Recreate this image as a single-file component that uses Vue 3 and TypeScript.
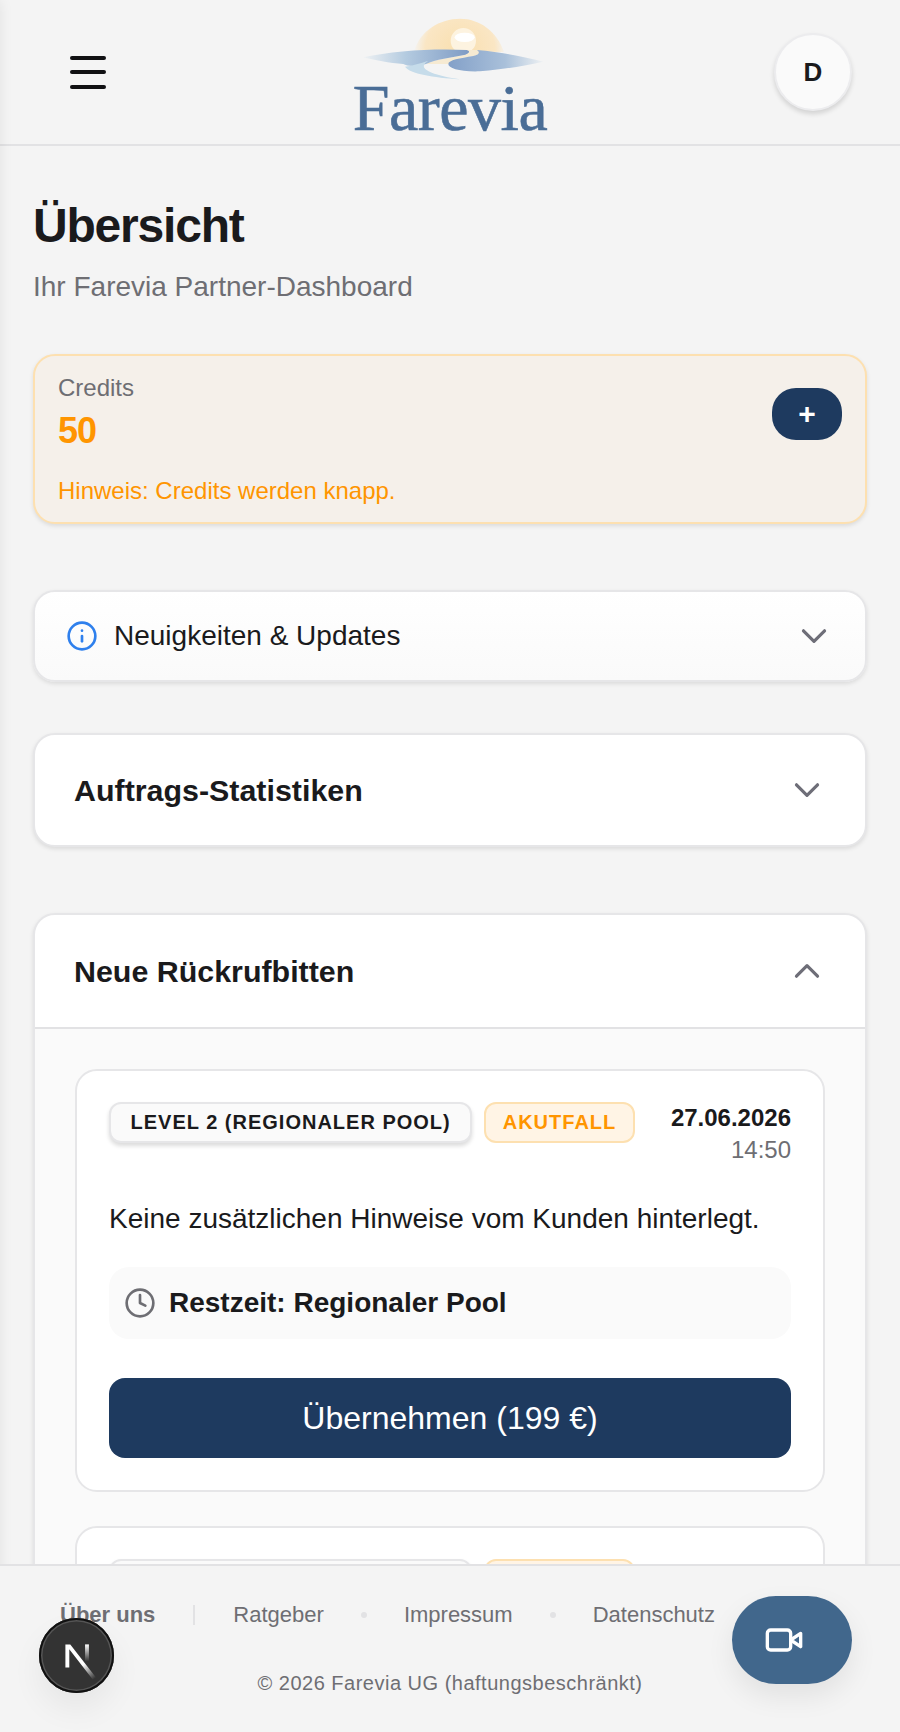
<script setup lang="ts">
interface Callback {
  level: string
  date: string
  time: string
  note: string
  remaining: string
  price: string
}

const footerLinks = ['Ratgeber', 'Impressum', 'Datenschutz']

const callbacks: Callback[] = [
  {
    level: 'Level 2 (Regionaler Pool)',
    date: '27.06.2026',
    time: '14:50',
    note: 'Keine zusätzlichen Hinweise vom Kunden hinterlegt.',
    remaining: 'Restzeit: Regionaler Pool',
    price: 'Übernehmen (199 €)'
  },
  {
    level: 'Level 2 (Regionaler Pool)',
    date: '27.06.2026',
    time: '14:50',
    note: 'Keine zusätzlichen Hinweise vom Kunden hinterlegt.',
    remaining: 'Restzeit: Regionaler Pool',
    price: 'Übernehmen (199 €)'
  }
]
</script>

<template>
  <div class="app">
    <div class="drawer-shadow"></div>

    <header class="topbar">
      <button class="menu-btn" aria-label="Menü">
        <span></span>
        <span></span>
        <span></span>
      </button>
      <div class="logo">
        <svg class="logo-mark" viewBox="0 0 780 240" width="260" height="80">
          <defs>
            <radialGradient id="halo" cx="420" cy="150" r="140" gradientUnits="userSpaceOnUse">
              <stop offset="0" stop-color="#f9dfae" />
              <stop offset="0.75" stop-color="#fae6c4" />
              <stop offset="1" stop-color="#f4f4f4" />
            </radialGradient>
            <linearGradient id="waterLeft" x1="0" y1="0" x2="1" y2="0">
              <stop offset="0" stop-color="#eef1f3" />
              <stop offset="0.4" stop-color="#b4cbe0" />
              <stop offset="1" stop-color="#7f9bc4" />
            </linearGradient>
            <linearGradient id="waterRight" x1="0" y1="0" x2="1" y2="0">
              <stop offset="0" stop-color="#83a0c8" />
              <stop offset="0.6" stop-color="#a9c0da" />
              <stop offset="1" stop-color="#eef1f3" />
            </linearGradient>
            <filter id="soft" x="-5%" y="-5%" width="110%" height="110%">
              <feGaussianBlur stdDeviation="2" />
            </filter>
          </defs>
          <g filter="url(#soft)">
            <path d="M283 152C300 92 360 56 420 56C480 56 532 96 552 156Z" fill="url(#halo)" />
            <circle cx="430" cy="122" r="38" fill="#fdf3e0" />
            <ellipse cx="434" cy="112" rx="30" ry="14" fill="#ffffff" />
            <path d="M436 150L472 150C484 156 480 164 460 168C425 174 395 180 385 192L318 192C345 178 395 172 436 164C448 160 450 154 436 150Z" fill="#f6ead2" />
            <path d="M130 172C220 152 340 145 440 150C452 153 448 160 436 164C395 172 345 178 318 192C292 200 262 200 250 192C210 190 160 180 130 172Z" fill="url(#waterLeft)" />
            <path d="M255 200C280 196 300 190 325 182C295 200 310 220 420 238C340 232 270 222 255 200Z" fill="#c6dcea" />
            <path d="M470 150C540 155 610 170 670 185C620 195 560 208 480 214C420 216 385 205 385 192C385 180 420 175 460 168C480 163 480 155 470 150Z" fill="url(#waterRight)" />
          </g>
        </svg>
        <span class="logo-word">Farevia</span>
      </div>
      <div class="avatar-wrap">
        <div class="avatar">D</div>
      </div>
    </header>

    <main class="content">
      <h1 class="title">Übersicht</h1>
      <p class="subtitle">Ihr Farevia Partner-Dashboard</p>

      <section class="credits">
        <div class="credits-row">
          <div>
            <div class="credits-label">Credits</div>
            <div class="credits-value">50</div>
          </div>
          <button class="credits-add">+</button>
        </div>
        <div class="credits-hint">Hinweis: Credits werden knapp.</div>
      </section>

      <section class="news">
        <svg class="news-icon" viewBox="0 0 24 24" fill="none" stroke="#2f80ed" stroke-width="2" stroke-linecap="round" stroke-linejoin="round">
          <circle cx="12" cy="12" r="10" />
          <path d="M12 16v-4" />
          <path d="M12 8h.01" />
        </svg>
        <span class="news-text">Neuigkeiten &amp; Updates</span>
        <svg class="chevron" viewBox="0 0 24 24" fill="none" stroke="#6e6e78" stroke-width="2.4" stroke-linecap="round" stroke-linejoin="round">
          <path d="m4.1 8.1 7.9 7.9 7.9-7.9" />
        </svg>
      </section>

      <section class="panel stats">
        <h2 class="panel-title">Auftrags-Statistiken</h2>
        <svg class="chevron" viewBox="0 0 24 24" fill="none" stroke="#6e6e78" stroke-width="2.4" stroke-linecap="round" stroke-linejoin="round">
          <path d="m4.1 8.1 7.9 7.9 7.9-7.9" />
        </svg>
      </section>

      <section class="panel callbacks">
        <div class="callbacks-head">
          <h2 class="panel-title">Neue Rückrufbitten</h2>
          <svg class="chevron" viewBox="0 0 24 24" fill="none" stroke="#6e6e78" stroke-width="2.4" stroke-linecap="round" stroke-linejoin="round">
            <path d="m4.1 15.9 7.9-7.9 7.9 7.9" />
          </svg>
        </div>
        <div class="callbacks-body">
          <article v-for="(item, i) in callbacks" :key="i" class="request">
            <div class="request-top">
              <span class="badge badge-level">{{ item.level }}</span>
              <span class="badge badge-acute">Akutfall</span>
              <div class="request-when">
                <div class="request-date">{{ item.date }}</div>
                <div class="request-time">{{ item.time }}</div>
              </div>
            </div>
            <p class="request-note">{{ item.note }}</p>
            <div class="request-remaining">
              <svg class="clock" viewBox="0 0 24 24" fill="none" stroke="#6e6e73" stroke-width="2" stroke-linecap="round" stroke-linejoin="round">
                <circle cx="12" cy="12" r="10" />
                <path d="M12 6v6l4 2" />
              </svg>
              <span>{{ item.remaining }}</span>
            </div>
            <button class="request-btn">{{ item.price }}</button>
          </article>
        </div>
      </section>
    </main>

    <footer class="footer">
      <nav class="footer-links">
        <a class="footer-active">Über uns</a>
        <span class="footer-divider"></span>
        <template v-for="(link, i) in footerLinks" :key="link">
          <span v-if="i > 0" class="footer-dot"></span>
          <a>{{ link }}</a>
        </template>
      </nav>
      <div class="copyright">© 2026 Farevia UG (haftungsbeschränkt)</div>
    </footer>

    <button class="next-badge" aria-label="Next.js">
      <svg viewBox="0 0 180 180" width="58" height="58">
        <defs>
          <linearGradient id="nDiag" x1="109" y1="116.5" x2="144.5" y2="160.5" gradientUnits="userSpaceOnUse">
            <stop offset="0" stop-color="#fff" />
            <stop offset="1" stop-color="#fff" stop-opacity="0" />
          </linearGradient>
          <linearGradient id="nBar" x1="121" y1="54" x2="120.8" y2="106.9" gradientUnits="userSpaceOnUse">
            <stop offset="0" stop-color="#fff" />
            <stop offset="1" stop-color="#fff" stop-opacity="0" />
          </linearGradient>
        </defs>
        <path d="M149.508 157.52L69.142 54H54V125.97H66.114V69.384L139.999 164.845C143.333 162.614 146.509 160.165 149.508 157.52Z" fill="url(#nDiag)" />
        <rect x="115" y="54" width="12" height="72" fill="url(#nBar)" />
      </svg>
    </button>

    <button class="video-btn" aria-label="Video">
      <svg viewBox="0 0 24 24" width="40" height="40" fill="none" stroke="#fff" stroke-width="2" stroke-linecap="round" stroke-linejoin="round">
        <path d="m22 8-6 4 6 4V8Z" />
        <rect x="2" y="6" width="14" height="12" rx="2" ry="2" />
      </svg>
    </button>
  </div>
</template>

<style>
html,
body {
  margin: 0;
  background: #f4f4f4;
}
</style>

<style scoped>
.app {
  position: relative;
  display: flex;
  flex-direction: column;
  width: 900px;
  height: 1732px;
  overflow: hidden;
  background: #f4f4f4;
  color: #1a1a1c;
  font-family: "Liberation Sans", Arial, sans-serif;
}

.drawer-shadow {
  position: absolute;
  top: 0;
  bottom: 0;
  left: -20px;
  width: 20px;
  box-shadow: 0 0 14px rgb(0 0 0 / 0.08);
}

button {
  border: none;
  font-family: inherit;
  cursor: pointer;
}

.topbar {
  flex: none;
  display: grid;
  grid-template-columns: 1fr auto 1fr;
  align-items: center;
  height: 144px;
  padding: 0 48px;
  border-bottom: 2px solid #e2e2e4;
}

.menu-btn {
  display: flex;
  flex-direction: column;
  justify-content: space-between;
  width: 36px;
  height: 33px;
  padding: 0;
  margin-left: 22px;
  background: none;
}

.menu-btn span {
  display: block;
  height: 4px;
  border-radius: 2px;
  background: #111113;
}

.logo {
  display: flex;
  flex-direction: column;
  align-items: center;
  width: 260px;
  height: 144px;
}

.logo-mark {
  display: block;
  flex: none;
}

.logo-word {
  margin-top: -1px;
  font-family: "Liberation Serif", "Times New Roman", serif;
  font-size: 66px;
  line-height: 57px;
  letter-spacing: -0.5px;
  color: #4a6d96;
  -webkit-text-stroke: 0.6px #4a6d96;
}

.avatar-wrap {
  display: flex;
  justify-content: flex-end;
}

.avatar {
  display: flex;
  align-items: center;
  justify-content: center;
  width: 74px;
  height: 74px;
  border: 2px solid #ececee;
  border-radius: 50%;
  background: #fafafa;
  box-shadow: 0 3px 5px rgb(0 0 0 / 0.14);
  font-size: 26px;
  font-weight: 700;
  color: #1a1a1c;
}

.content {
  flex: 1;
  min-height: 0;
  overflow: hidden;
  padding: 0 33px;
}

.title {
  margin: 51px 0 0;
  font-size: 48px;
  line-height: 58px;
  font-weight: 700;
  letter-spacing: -1.2px;
}

.subtitle {
  margin: 14px 0 0;
  font-size: 28px;
  line-height: 36px;
  color: #6e6e73;
}

.credits {
  margin-top: 49px;
  height: 170px;
  box-sizing: border-box;
  padding: 19px 23px 0;
  border: 2px solid #fde0b0;
  border-radius: 22px;
  background: #f5f0ea;
  box-shadow: 0 2px 4px rgb(0 0 0 / 0.1);
}

.credits-row {
  display: flex;
  align-items: center;
  justify-content: space-between;
}

.credits-label {
  font-size: 24px;
  line-height: 26px;
  color: #6e6e73;
}

.credits-value {
  margin-top: 10px;
  font-size: 36px;
  line-height: 40px;
  font-weight: 700;
  letter-spacing: -1px;
  color: #ff9500;
}

.credits-add {
  width: 70px;
  height: 52px;
  margin-top: 2px;
  border-radius: 24px;
  background: #1e3a5f;
  color: #fff;
  font-size: 30px;
  font-weight: 700;
  line-height: 52px;
  padding: 0;
}

.credits-hint {
  margin-top: 26px;
  font-size: 24px;
  line-height: 28px;
  color: #ff9500;
}

.news {
  display: flex;
  align-items: center;
  height: 92px;
  box-sizing: border-box;
  margin-top: 66px;
  padding: 0 35px 0 31px;
  border: 2px solid #e6e6e8;
  border-radius: 22px;
  background: linear-gradient(#ffffff, #fafafa);
  box-shadow: 0 2px 4px rgb(0 0 0 / 0.1);
}

.news-icon {
  flex: none;
  width: 32px;
  height: 32px;
  margin-right: 16px;
}

.news-text {
  flex: 1;
  font-size: 28px;
  color: #1a1a1c;
}

.chevron {
  flex: none;
  width: 32px;
  height: 32px;
}

.panel {
  border: 2px solid #e6e6e8;
  border-radius: 22px;
  background: #fff;
  box-shadow: 0 2px 4px rgb(0 0 0 / 0.1);
}

.panel-title {
  margin: 0;
  flex: 1;
  font-size: 30.4px;
  font-weight: 700;
  color: #1a1a1c;
}

.stats {
  display: flex;
  align-items: center;
  box-sizing: border-box;
  height: 114px;
  margin-top: 51px;
  padding: 0 42px 0 39px;
}

.callbacks {
  margin-top: 66px;
  overflow: hidden;
}

.callbacks-head {
  display: flex;
  align-items: center;
  box-sizing: border-box;
  height: 114px;
  padding: 0 42px 0 39px;
  border-bottom: 2px solid #e2e2e4;
}

.callbacks-body {
  display: flex;
  flex-direction: column;
  gap: 34px;
  padding: 40px 40px;
  background: #fafafa;
}

.request {
  padding: 31px 32px 32px;
  border: 2px solid #e6e6e8;
  border-radius: 22px;
  background: #fff;
}

.request-top {
  display: flex;
  align-items: flex-start;
  gap: 12px;
}

.badge {
  box-sizing: border-box;
  height: 41px;
  padding: 0 19.5px;
  border: 2px solid;
  border-radius: 12px;
  font-size: 20px;
  line-height: 37px;
  font-weight: 700;
  letter-spacing: 1px;
  text-transform: uppercase;
  white-space: nowrap;
}

.badge-level {
  border-color: #e6e6e8;
  background: #fafafa;
  color: #1a1a1c;
  box-shadow: 0 3px 4px rgb(0 0 0 / 0.14);
}

.badge-acute {
  padding: 0 16.5px;
  border-color: #fde0b0;
  background: #fff4e5;
  color: #ff9500;
}

.request-when {
  margin-left: auto;
  text-align: right;
}

.request-date {
  font-size: 24px;
  line-height: 32px;
  font-weight: 700;
}

.request-time {
  font-size: 24px;
  line-height: 32px;
  color: #6e6e73;
}

.request-note {
  margin: 35px 0 0;
  font-size: 28px;
  line-height: 36px;
  color: #1a1a1c;
}

.request-remaining {
  display: flex;
  align-items: center;
  gap: 13px;
  height: 72px;
  margin-top: 30px;
  padding: 0 15px;
  border-radius: 20px;
  background: #fafafa;
  font-size: 28px;
  font-weight: 700;
}

.clock {
  flex: none;
  width: 32px;
  height: 32px;
}

.request-btn {
  display: block;
  width: 100%;
  height: 80px;
  margin-top: 39px;
  border-radius: 16px;
  background: #1e3a5f;
  color: #fff;
  font-size: 32px;
}

.footer {
  flex: none;
  position: relative;
  height: 168px;
  box-sizing: border-box;
  padding: 35px 0 0 60px;
  border-top: 2px solid #e2e2e4;
  background: #f4f4f4;
  color: #6e6e73;
}

.footer-links {
  display: flex;
  align-items: center;
  gap: 39px;
  font-size: 22px;
  line-height: 28px;
}

.footer-active {
  font-weight: 700;
}

.footer-divider {
  width: 2px;
  height: 20px;
  margin: 0 -1px;
  background: #e2e2e4;
}

.footer-dot {
  width: 6px;
  height: 6px;
  margin: 0 -2px;
  border-radius: 50%;
  background: #e2e2e4;
}

.copyright {
  margin: 41px 0 0 -60px;
  text-align: center;
  font-size: 20px;
  line-height: 26px;
  letter-spacing: 0.5px;
}

.next-badge {
  position: absolute;
  left: 39px;
  top: 1618px;
  display: flex;
  align-items: center;
  justify-content: center;
  width: 75px;
  height: 75px;
  padding: 0;
  border-radius: 50%;
  background: #333;
  box-shadow: inset 0 0 0 2px #111, inset 0 0 0 3.5px #555, 0 16px 32px rgb(0 0 0 / 0.06);
}

.video-btn {
  position: absolute;
  left: 732px;
  top: 1596px;
  display: flex;
  align-items: center;
  box-sizing: border-box;
  width: 120px;
  height: 88px;
  padding: 0 0 0 32px;
  border-radius: 44px;
  background: #41678c;
  box-shadow: 0 12px 28px rgb(0 0 0 / 0.08);
}
</style>
